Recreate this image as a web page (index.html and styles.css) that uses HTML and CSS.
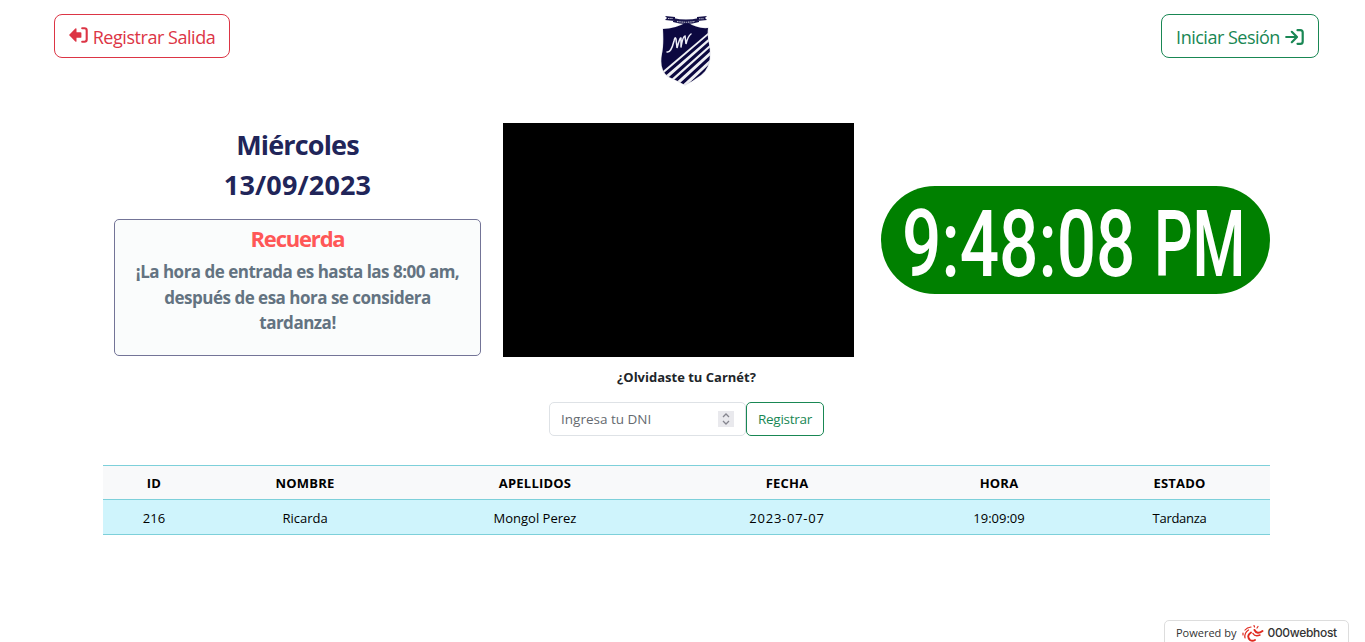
FILE: index.html
```html
<!DOCTYPE html>
<html lang="es">
<head>
<meta charset="utf-8">
<title>Asistencia</title>
<link rel="stylesheet" href="styles.css">
</head>
<body>
<header class="top">
  <button class="btn btn-danger" type="button">
    <svg class="icon-exit" width="19" height="16" viewBox="0 0 19 16"><path d="M0 8 6.3 1.4Q7.5.7 7.5 2V5.2H11.5Q12.4 5.2 12.4 6.1V9.9Q12.4 10.8 11.5 10.8H7.5V14Q7.5 15.3 6.3 14.6Z" fill="currentColor"/><path d="M13.2 1.2H15.5Q17.7 1.2 17.7 3.4V12.6Q17.7 14.8 15.5 14.8H13.2" fill="none" stroke="currentColor" stroke-width="2.1" stroke-linecap="round"/></svg>
    <span class="t-exit">Registrar Salida</span>
  </button>
  <svg class="crest" width="56" height="74" viewBox="0 0 56 74">
    <defs><clipPath id="shield"><path d="M29 8Q39 15 50 14Q49 22 51 30Q55 52 43 61Q35 67 27 71Q18 66 11 63Q1 57 4 40Q6 31 5 15Q17 15 29 8Z"/></clipPath></defs>
    <path d="M29 8Q39 15 50 14Q49 22 51 30Q55 52 43 61Q35 67 27 71Q18 66 11 63Q1 57 4 40Q6 31 5 15Q17 15 29 8Z" fill="#efeff4" stroke="#e3e3ea" stroke-width="1.2"/>
    <g clip-path="url(#shield)">
      <path d="M0 5H56V14L5 57 0 56Z" fill="#0c0840"/>
      <path d="M6 61 56 18M10 66 56 25M15 69 56 32M20 73 56 40M25 77 56 48M32 78 56 56" stroke="#0c0840" stroke-width="3.1"/>
    </g>
    <path d="M9 38Q13 39 16 27Q17 22 18 25L19 34Q22 23 23 24L23 33M23 33Q25 22 27 22L28 30Q30 22 33 20" fill="none" stroke="#eeeef8" stroke-width="1.5" stroke-linecap="round"/>
    <path d="M7 2 17 3V7L7 6 9 4ZM39 3 49 2 47 4 49 6 39 7ZM15 4Q28 7 41 4V8Q28 12 15 8Z" fill="#17134a"/>
    <path d="M10 4.5H15M19 7.4Q28 9 37 7.4M41 4.8H46" fill="none" stroke="#bcbccd" stroke-width="1.1" stroke-dasharray="1.5 .7"/>
  </svg>
  <button class="btn btn-success" type="button">
    <span class="t-login">Iniciar Sesión</span>
    <svg class="icon-login" width="19" height="16" viewBox="0 0 19 16"><path d="M1.2 8H11.5M6.8 2.8 12 8 6.8 13.2M12.5 1.2H15.3Q17.7 1.2 17.7 3.6V12.4Q17.7 14.8 15.3 14.8H12.5" fill="none" stroke="currentColor" stroke-width="2.2" stroke-linecap="round" stroke-linejoin="round"/></svg>
  </button>
</header>
<main>
  <div class="panels">
    <section class="info">
      <h1 class="day">Miércoles</h1>
      <h1 class="date">13/09/2023</h1>
      <div class="notice">
        <h2>Recuerda</h2>
        <p>¡La hora de entrada es hasta las 8:00 am,<br>después de esa hora se considera<br>tardanza!</p>
      </div>
    </section>
    <div class="video"></div>
    <div class="clock"><span class="time">9:48:08</span> <span class="period">PM</span></div>
  </div>
  <form class="dni">
    <label for="dni">¿Olvidaste tu Carnét?</label>
    <div class="row">
      <div class="field">
        <input id="dni" type="text" placeholder="Ingresa tu DNI">
        <span class="spin"><svg width="16" height="16" viewBox="0 0 16 16"><path d="M5 6 8 3 11 6M5 10 8 13 11 10" fill="none" stroke="#85858e" stroke-width="1.3"/></svg></span>
      </div>
      <button class="btn-sm" type="button">Registrar</button>
    </div>
  </form>
  <table>
    <colgroup><col class="c1"><col class="c2"><col class="c3"><col class="c4"><col class="c5"><col class="c6"></colgroup>
    <thead><tr><th>ID</th><th>NOMBRE</th><th>APELLIDOS</th><th>FECHA</th><th>HORA</th><th>ESTADO</th></tr></thead>
    <tbody><tr><td>216</td><td>Ricarda</td><td>Mongol Perez</td><td class="num">2023-07-07</td><td>19:09:09</td><td class="state">Tardanza</td></tr></tbody>
  </table>
</main>
<div class="host">
  <span class="powered">Powered by</span>
  <svg width="22" height="18" viewBox="0 0 22 18"><g fill="none" stroke="#e02b20" stroke-linecap="round"><path d="M20.5 7Q15 11 12.5 6" stroke-width="2"/><path d="M18 11Q13 13 11 9.5" stroke-width="1.5"/><path d="M9 8.5Q4 12 8 16Q10.500 17.5 13 16" stroke-width="1.9"/><path d="M6.500 6Q2 9 3 14M9 3Q5 3.500 3 6M12 1.500 12.500 3M16 2.500 15 4M1 9V11" stroke-width="1.2"/></g></svg>
  <span class="brand">000webhost</span>
</div>
</body>
</html>
```
FILE: styles.css
```css
* { box-sizing: border-box; }
body {
  margin: 0;
  height: 642px;
  overflow: hidden;
  position: relative;
  background: #fff;
  color: #212529;
  font-family: "Open Sans", "Noto Sans", sans-serif;
}
.top {
  display: grid;
  grid-template-columns: 176px 56px 158px;
  justify-content: space-between;
  align-items: start;
  padding: 14px 46px 0 54px;
  height: 123px;
}
.btn {
  height: 44px;
  display: flex;
  align-items: center;
  justify-content: center;
  gap: 5px;
  padding: 0;
  background: #fff;
  border: 1px solid;
  border-radius: 8px;
  font: 18px/28px "Open Sans", sans-serif;
  white-space: nowrap;
}
.btn span { padding-top: 1px; }
.btn-danger { color: #dc3545; }
.btn-success { color: #198754; }
.icon-exit { margin-top: -3px; }
.icon-login { margin-top: 2px; }
.t-exit { letter-spacing: -.46px; }
.t-login { letter-spacing: -.5px; }
.crest { margin-left: -10px; }
.panels {
  display: grid;
  grid-template-columns: 367px 351px 389px;
  column-gap: 22px;
  padding-left: 114px;
  height: 234px;
}
.clock {
  display: flex;
  align-items: center;
  margin: 63px 0 0 5px;
  padding-left: 21px;
  width: 389px;
  height: 108px;
  border-radius: 54px;
  background: #008000;
}
.clock span {
  color: #fff;
  font: 500 93px/108px Roboto, sans-serif;
  white-space: nowrap;
  transform-origin: left center;
}
.time { width: 252px; transform: translateY(5px) scaleX(.745); }
.period { width: 92px; transform: translateY(5px) scaleX(.65); }
.video { background: #000; }
.info { text-align: center; }
.day, .date { margin: 0; height: 40px; font-size: 27px; line-height: 43px; font-weight: 700; color: #212559; }
.day { letter-spacing: -.85px; }
.date { letter-spacing: .15px; }
.notice {
  margin-top: 16px;
  height: 137px;
  border: 1px solid #737497;
  border-radius: 5px;
  background: #fafcfc;
}
.notice h2 { margin: 4px 0 7px; height: 28px; line-height: 28px; font-size: 22px; color: #ff5757; letter-spacing: -1.2px; }
.notice p { margin: 0; font-size: 17px; line-height: 25.5px; font-weight: 700; color: #637381; letter-spacing: -.5px; white-space: nowrap; }
.dni { width: 275px; margin: 0 0 0 549px; text-align: center; }
.dni label { display: block; height: 45px; line-height: 41px; font-size: 13px; font-weight: 700; letter-spacing: 0; }
.row { display: flex; height: 34px; }
.field { display: flex; align-items: center; width: 197px; border: 1px solid #dee2e6; border-radius: 5px; }
.field input { flex: 1; min-width: 0; margin: 0; padding: 0 0 0 11px; border: 0; background: none; font: 13.5px "Open Sans", sans-serif; }
.field input::placeholder { color: #656a70; opacity: 1; }
.spin { width: 16px; height: 16px; margin-right: 11px; background: #e9e9ed; }
.spin svg { display: block; }
.btn-sm { width: 78px; padding: 0; border: 1px solid #198754; border-radius: 5px; background: #fff; color: #198754; font: 13.5px "Open Sans", sans-serif; letter-spacing: -.25px; }
table { width: 1167px; margin: 29px 0 0 103px; table-layout: fixed; border-collapse: separate; border-spacing: 0; text-align: center; color: #000; }
.c1 { width: 102px; }
.c2 { width: 200px; }
.c3 { width: 260px; }
.c4 { width: 244px; }
.c5 { width: 180px; }
.c6 { width: 181px; }
th, td { padding: 0; border-bottom: 1px solid #7dd0da; font-size: 13px; }
th { height: 35px; border-top: 1px solid #7dd0da; background: #f8f9fa; letter-spacing: .2px; }
td { height: 35px; padding-top: 2px; background: #cff4fc; }
.num { letter-spacing: .75px; }
.state { letter-spacing: -.3px; }
.host {
  position: absolute;
  left: 1164px;
  top: 620px;
  width: 185px;
  height: 30px;
  display: flex;
  align-items: flex-start;
  padding: 3px 0 0 11px;
  border: 1px solid #ddd;
  border-radius: 5px;
  background: #fff;
  color: #333;
  font-size: 11px;
  line-height: 18px;
  white-space: nowrap;
}
.host svg { margin: 0 3px 0 6px; }
.brand { font: 500 12px/18px Inter, sans-serif; letter-spacing: -.3px; }
```
